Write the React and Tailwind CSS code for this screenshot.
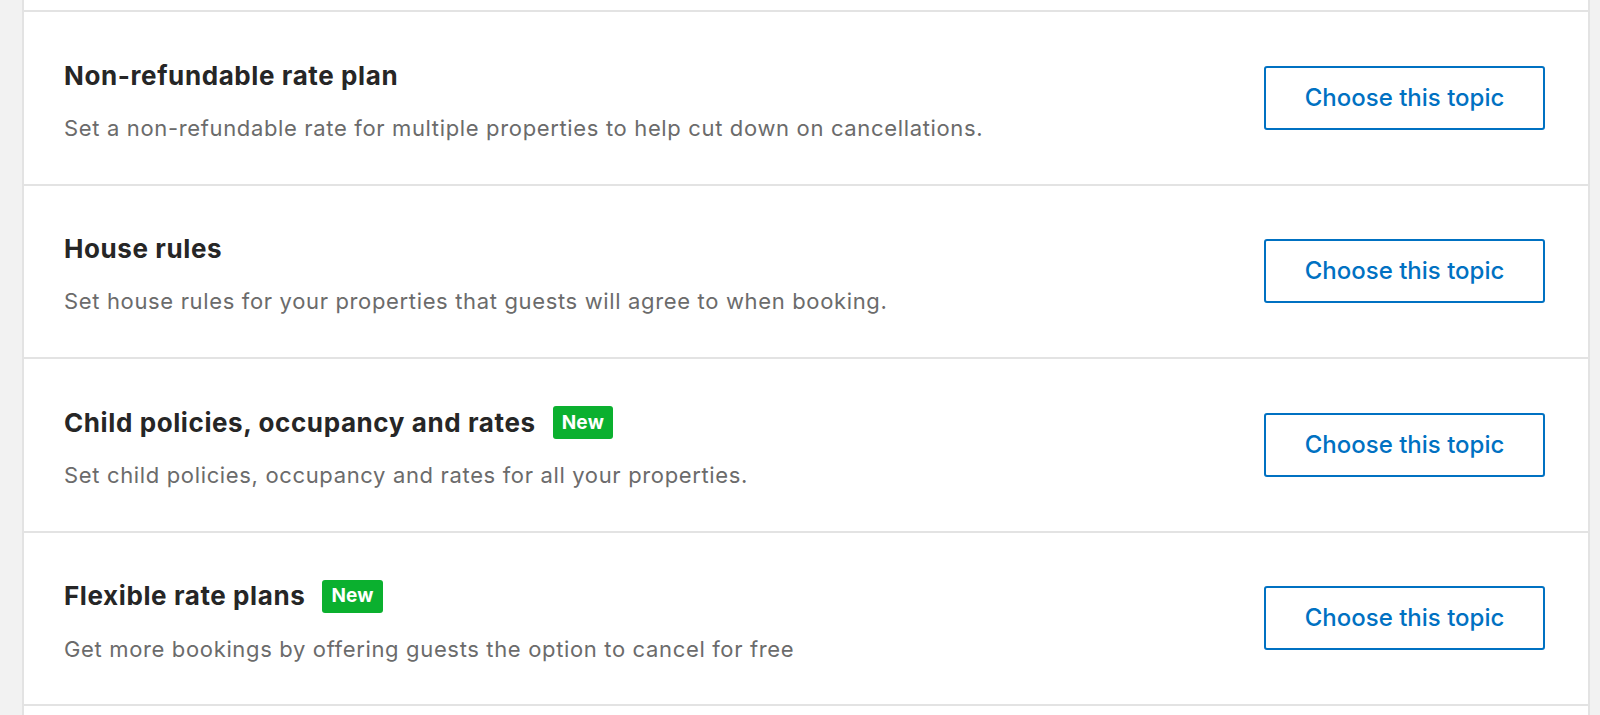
import React from 'react';

const topics = [
  {
    title: 'Non-refundable rate plan',
    description: 'Set a non-refundable rate for multiple properties to help cut down on cancellations.',
  },
  {
    title: 'House rules',
    description: 'Set house rules for your properties that guests will agree to when booking.',
  },
  {
    title: 'Child policies, occupancy and rates',
    description: 'Set child policies, occupancy and rates for all your properties.',
    isNew: true,
  },
  {
    title: 'Flexible rate plans',
    description: 'Get more bookings by offering guests the option to cancel for free',
    isNew: true,
  },
];

function TopicRow({ title, description, isNew }) {
  return (
    <div className="flex h-[173.5px] items-center justify-between border-b-2 border-[#e3e3e3] pl-[40px] pr-[43px]">
      <div className="min-w-0 pt-[6px]">
        <div className="flex items-center gap-[17px]">
          <h3 className="text-[26px] font-bold leading-[32px] tracking-[0.6px] text-[#262626]">{title}</h3>
          {isNew && (
            <span className="inline-flex h-[33px] items-center rounded-[3px] bg-[#0bb02f] px-[9px] text-[19px] font-bold tracking-[0.2px] text-white">
              New
            </span>
          )}
        </div>
        <p className="mt-[22px] text-[22px] leading-[28px] tracking-[0.65px] text-[#6b6b6b]">{description}</p>
      </div>
      <button className="h-[64px] w-[281px] shrink-0 rounded-[3px] border-2 border-[#0071c2] bg-white text-[24px] font-medium text-[#0071c2]">
        Choose this topic
      </button>
    </div>
  );
}

export default function App() {
  return (
    <div className="flex h-[715px] overflow-hidden bg-[#f2f2f2] font-['Inter',sans-serif]">
      <div className="ml-[22px] w-[1568px] border-x-2 border-[#e3e3e3] bg-white">
        <div className="h-[12px] border-b-2 border-[#e3e3e3]" />
        {topics.map((topic) => (
          <TopicRow key={topic.title} {...topic} />
        ))}
      </div>
    </div>
  );
}
